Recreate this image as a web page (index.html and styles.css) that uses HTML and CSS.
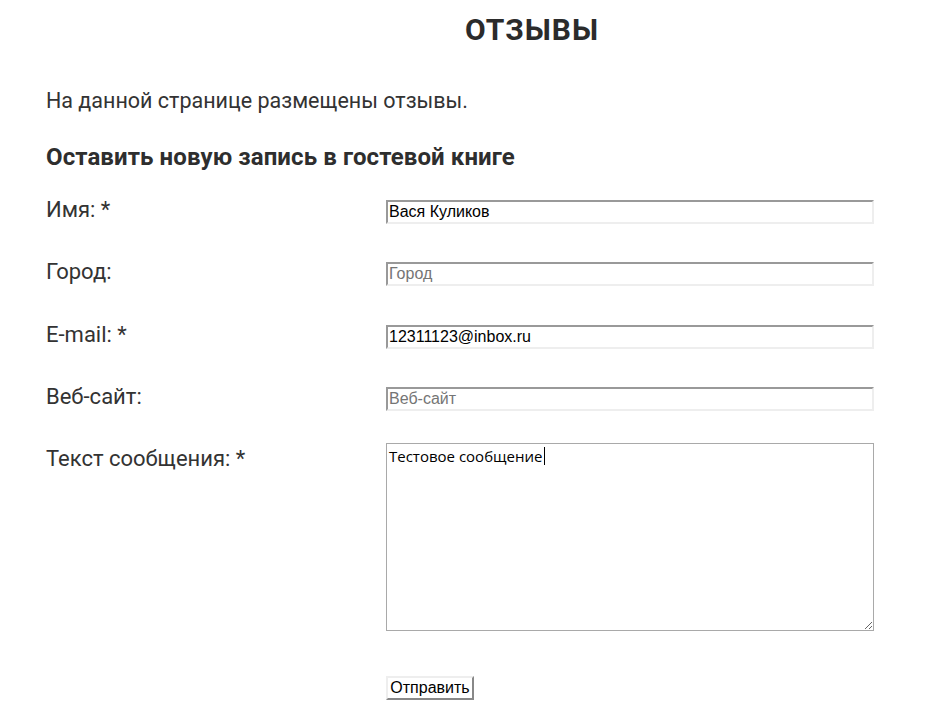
FILE: index.html
```html
<!DOCTYPE html>
<html>
<head>
<meta charset="UTF-8">
<title>Отзывы</title>
<link rel="stylesheet" href="styles.css">
</head>
<body>
	<div class="page">
		<h1 class="title">ОТЗЫВЫ</h1>
		<p class="intro">На данной странице размещены отзывы.</p>

		<h2 class="subtitle">Оставить новую запись в гостевой книге</h2>

		<form class="guestbook">
			<div class="row">
				<label class="label">Имя: *</label>
				<input type="text" class="field" value="Вася Куликов" placeholder="Имя"/>
			</div>
			<div class="row">
				<label class="label">Город:</label>
				<input type="text" class="field" placeholder="Город"/>
			</div>
			<div class="row">
				<label class="label">E-mail: *</label>
				<input type="text" class="field" value="12311123@inbox.ru" placeholder="E-mail"/>
			</div>
			<div class="row">
				<label class="label">Веб-сайт:</label>
				<input type="text" class="field" placeholder="Веб-сайт"/>
			</div>
			<div class="row row-text">
				<label class="label">Текст сообщения: *</label>
				<div class="message-box">
					<textarea class="message">Тестовое сообщение</textarea>
					<!-- курсор ввода в конце текста -->
					<span class="caret"></span>
				</div>
			</div>
			<div class="row row-submit">
				<span class="label"></span>
				<input type="button" class="send" value="Отправить"/>
			</div>
		</form>
	</div>
</body>
</html>
```

FILE: styles.css
```css
/* общий вид страницы */
body{margin:0;background:#fff;color:#333;font-family:Roboto, "Noto Sans", sans-serif;overflow:hidden;}
.page{padding:0 0 0 46px;width:828px;}

/* заголовок по центру колонки сайта */
.title{margin:12px 0 0 144px;text-align:center;font-size:30px;font-weight:700;letter-spacing:1px;line-height:36px;color:#2b2b2b;}
.intro{margin:40px 0 0;font-size:21.5px;font-weight:400;line-height:26px;}
.subtitle{margin:29px 0 0;font-size:24px;font-weight:700;letter-spacing:0.1px;line-height:28px;color:#2e2e2e;}

/* строки формы: подпись слева, поле справа */
.guestbook{margin-top:26px;}
.row{display:flex;align-items:flex-start;height:62.33px;}
.label{width:340px;flex:none;font-size:22px;font-weight:400;line-height:26px;}
.field{width:488px;height:24px;box-sizing:border-box;margin:3px 0 0;padding:0 1px;
	border:2px solid #eee;border-top-color:#999;border-left-color:#999;
	font-family:"Liberation Sans", Arial, sans-serif;font-size:16px;color:#000;background:#fff;}
.field::placeholder{color:#757575;}

/* текст сообщения */
.row-text{height:233px;}
.message-box{position:relative;margin-top:-3px;}
.message{display:block;width:488px;height:188px;box-sizing:border-box;margin:0;padding:3px 2px;
	border:1px solid #a9a9a9;font-family:"Open Sans", "Noto Sans", sans-serif;font-size:15px;line-height:18px;color:#000;resize:both;}
.caret{position:absolute;left:158px;top:4px;width:1px;height:18px;background:#000;}

/* кнопка отправки */
.row-submit{height:24px;}
.send{margin:-3px 0 0;height:24px;width:88px;padding:0;border:2px solid #888;border-top-color:#eee;border-left-color:#eee;
	background:#fff;font-family:"Liberation Sans", Arial, sans-serif;font-size:16px;color:#000;}
```
